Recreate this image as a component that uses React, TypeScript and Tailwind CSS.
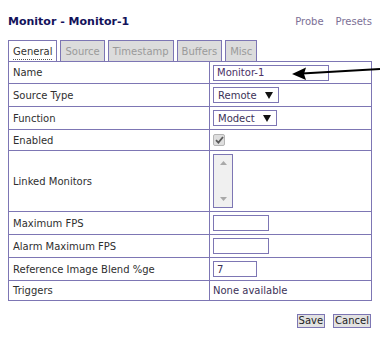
import React from 'react';

const rows = [
  { label: 'Name', h: 'h-[22px]', kind: 'name' },
  { label: 'Source Type', h: 'h-[23px]', kind: 'remote' },
  { label: 'Function', h: 'h-[23px]', kind: 'modect' },
  { label: 'Enabled', h: 'h-[21px]', kind: 'check' },
  { label: 'Linked Monitors', h: 'h-[61px]', kind: 'linked' },
  { label: 'Maximum FPS', h: 'h-[23px]', kind: 'fps' },
  { label: 'Alarm Maximum FPS', h: 'h-[23px]', kind: 'fps' },
  { label: 'Reference Image Blend %ge', h: 'h-[23px]', kind: 'blend' },
  { label: 'Triggers', h: 'h-[20px]', kind: 'none' },
];

const tabs = ['General', 'Source', 'Timestamp', 'Buffers', 'Misc'];

function FakeSelect({ value, width }: { value: string; width: string }) {
  return (
    <div className={`${width} h-[16px] border border-[#7d76b4] bg-white flex items-center justify-between pl-[4px] pr-[5px] text-[#3c3258]`}>
      <span>{value}</span>
      <svg width="8" height="7" viewBox="0 0 8 7">
        <path d="M0 0 L8 0 L4 7 Z" fill="#111" />
      </svg>
    </div>
  );
}

function Value({ kind }: { kind: string }) {
  if (kind === 'name')
    return (
      <div className="w-[116px] h-[16px] border border-[#7d76b4] bg-white pl-[3px] flex items-center text-[#4a2f66]">
        Monitor-1
      </div>
    );
  if (kind === 'remote') return <FakeSelect value="Remote" width="w-[66px]" />;
  if (kind === 'modect') return <FakeSelect value="Modect" width="w-[64px]" />;
  if (kind === 'check')
    return (
      <div className="w-[12px] h-[12px] mt-[-1px] rounded-[2px] border border-[#b5b5b5] bg-[#dedede] flex items-center justify-center">
        <svg width="9" height="8" viewBox="0 0 9 8">
          <path d="M1 4.2 L3.4 6.6 L8 1" stroke="#5a5a5a" strokeWidth="1.8" fill="none" />
        </svg>
      </div>
    );
  if (kind === 'linked')
    return (
      <div className="w-[20px] h-[54px] border border-[#7d76b4] bg-[#f0f0f0] flex flex-col items-center justify-between py-[6px]">
        <svg width="7" height="4" viewBox="0 0 7 4">
          <path d="M0 4 L3.5 0 L7 4 Z" fill="#a9a9a9" />
        </svg>
        <svg width="7" height="4" viewBox="0 0 7 4">
          <path d="M0 0 L7 0 L3.5 4 Z" fill="#a9a9a9" />
        </svg>
      </div>
    );
  if (kind === 'fps') return <div className="w-[56px] h-[16px] border border-[#7d76b4] bg-white" />;
  if (kind === 'blend')
    return (
      <div className="w-[44px] h-[16px] border border-[#7d76b4] bg-white pl-[3px] flex items-center text-[#3c3258]">
        7
      </div>
    );
  return <span className="text-[#3c3258]">None available</span>;
}

export default function App() {
  return (
    <div className="relative w-[380px] h-[364px] bg-white text-[10px] text-[#2f2f2f] font-['DejaVu_Sans',Verdana,sans-serif]">
      <header className="flex items-end justify-between pl-[8px] pr-[8px] pt-[13px] h-[27px]">
        <h2 className="text-[11px] font-bold text-[#14125a] leading-none">Monitor - Monitor-1</h2>
        <div className="flex gap-[12px] text-[#7c7096] leading-none">
          <span>Probe</span>
          <span>Presets</span>
        </div>
      </header>

      <nav className="flex gap-[3px] ml-[8px] mt-[13px] h-[21px]">
        {tabs.map((t, i) => (
          <div
            key={t}
            className={
              i === 0
                ? 'h-[21px] px-[4px] flex items-center border border-b-0 border-[#7d76b4] bg-white text-[#333]'
                : 'h-[21px] px-[4px] flex items-center border border-b-0 border-[#7d76b4] bg-[#dcdcdc] text-[#9a9a9a]'
            }
          >
            <span className={i === 0 ? 'pt-[1px] border-b border-dotted border-[#555] leading-[15px]' : 'leading-[15px]'}>{t}</span>
          </div>
        ))}
      </nav>

      <section className="ml-[8px] w-[364px] border border-b-0 border-[#7d76b4]">
        {rows.map((r) => (
          <div key={r.label} className={`flex ${r.h} border-b border-[#7d76b4]`}>
            <div className="w-[201px] border-r border-[#7d76b4] pl-[4px] flex items-center">{r.label}</div>
            <div className="flex-1 pl-[3px] flex items-center">
              <Value kind={r.kind} />
            </div>
          </div>
        ))}
      </section>

      <div className="flex justify-end gap-[8px] pr-[9px] mt-[13px]">
        <button className="h-[14px] px-[1px] border border-[#7d76b4] bg-[#e2e2e2] text-[10px] leading-none text-[#222]">Save</button>
        <button className="h-[14px] px-[1px] border border-[#7d76b4] bg-[#e2e2e2] text-[10px] leading-none text-[#222]">Cancel</button>
      </div>

      <svg className="absolute left-0 top-0 pointer-events-none" width="380" height="364">
        <line x1="380" y1="69" x2="302" y2="73.5" stroke="#000" strokeWidth="2.2" />
        <path d="M292 74 L306 67.5 L304 74 L306 80 Z" fill="#000" />
      </svg>
    </div>
  );
}
